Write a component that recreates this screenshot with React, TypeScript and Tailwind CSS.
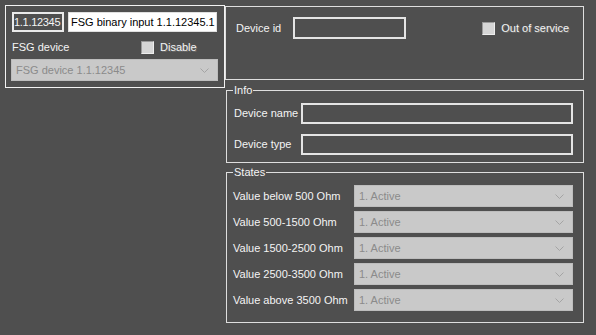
import React from 'react';

const font = { fontFamily: '"Liberation Sans", Arial, sans-serif' };

const Chevron: React.FC = () => (
  <svg width="9" height="5" viewBox="0 0 9 5" className="shrink-0">
    <path d="M0.5 0.5 L4.5 4.5 L8.5 0.5" fill="none" stroke="#a4a4a4" strokeWidth="1" />
  </svg>
);

const Combo: React.FC<{ value: string; className?: string }> = ({ value, className }) => (
  <div
    className={
      'flex items-center justify-between bg-[#c9c9c9] border border-[#bdbdbd] pl-[4px] pr-[8px] text-[11px] text-[#8b8b8b] ' +
      (className ?? '')
    }
  >
    <span>{value}</span>
    <Chevron />
  </div>
);

const CheckBox: React.FC<{ label: string }> = ({ label }) => (
  <div className="flex items-center gap-[6px]">
    <div className="w-[13px] h-[13px] bg-[#d6d6d6] border border-t-[#9a9a9a] border-l-[#9a9a9a] border-r-[#eeeeee] border-b-[#eeeeee]" />
    <span className="text-[11px] text-[#f4f4f4] [text-shadow:1px_1px_0_#6a6a6a]">{label}</span>
  </div>
);

const TextBox: React.FC<{ className?: string }> = ({ className }) => (
  <div className={'border-2 border-[#e4e4e4] bg-[#4f4f4f] ' + (className ?? '')} />
);

const Group: React.FC<{ title: string; className?: string; children: React.ReactNode }> = ({
  title,
  className,
  children,
}) => (
  <div className={'relative border border-[#dedede] ' + (className ?? '')}>
    <span className="absolute -top-[8px] left-[6px] bg-[#4f4f4f] px-[1px] text-[11px] leading-[14px] text-[#f4f4f4]">
      {title}
    </span>
    {children}
  </div>
);

const states = [
  'Value below 500 Ohm',
  'Value 500-1500 Ohm',
  'Value 1500-2500 Ohm',
  'Value 2500-3500 Ohm',
  'Value above 3500 Ohm',
];

export default function App() {
  return (
    <div style={font} className="w-[596px] h-[335px] bg-[#4f4f4f] flex items-start pl-[5px] pt-[5px] text-[#f4f4f4] overflow-hidden">
      {/* left panel */}
      <div className="w-[220px] h-[83px] border border-[#f2f2f2] flex flex-col pl-[6px] pt-[6px]">
        <div className="flex gap-[4px]">
          <div className="w-[52px] h-[20px] border-2 border-[#eaeaea] bg-[#4f4f4f] flex items-center text-[11px] tracking-[-0.3px] whitespace-nowrap">
            1.1.12345
          </div>
          <div className="w-[149px] h-[20px] border border-[#e0e0e0] bg-white flex items-center pl-[2px] text-[11px] text-black whitespace-nowrap">
            FSG binary input 1.1.12345.1
          </div>
        </div>
        <div className="flex items-center h-[13px] mt-[9px]">
          <span className="text-[11px] w-[129px]">FSG device</span>
          <CheckBox label="Disable" />
        </div>
        <Combo value="FSG device 1.1.12345" className="w-[207px] h-[22px] mt-[5px] -ml-[1px]" />
      </div>

      {/* right column */}
      <div className="w-[359px] flex flex-col mt-[1px]">
        <div className="h-[74px] border border-[#dedede] flex items-start pl-[10px] pt-[10px]">
          <div className="flex items-center h-[22px] gap-[12px]">
            <span className="text-[11px]">Device id</span>
            <TextBox className="w-[113px] h-[22px]" />
          </div>
          <div className="ml-[76px] mt-[3px]">
            <CheckBox label="Out of service" />
          </div>
        </div>

        <Group title="Info" className="ml-[1px] mt-[10px] h-[73px] pl-[7px] pt-[12px] flex flex-col gap-[10px]">
          <div className="flex items-center h-[21px]">
            <span className="text-[11px] w-[67px]">Device name</span>
            <TextBox className="w-[272px] h-[21px]" />
          </div>
          <div className="flex items-center h-[21px]">
            <span className="text-[11px] w-[67px]">Device type</span>
            <TextBox className="w-[272px] h-[21px]" />
          </div>
        </Group>

        <Group title="States" className="ml-[1px] mt-[9px] h-[151px] pl-[6px] pt-[12px] flex flex-col gap-[4px]">
          {states.map((s) => (
            <div key={s} className="flex items-center h-[22px]">
              <span className="text-[11px] w-[121px] whitespace-nowrap">{s}</span>
              <Combo value="1. Active" className="w-[219px] h-[22px]" />
            </div>
          ))}
        </Group>
      </div>
    </div>
  );
}
